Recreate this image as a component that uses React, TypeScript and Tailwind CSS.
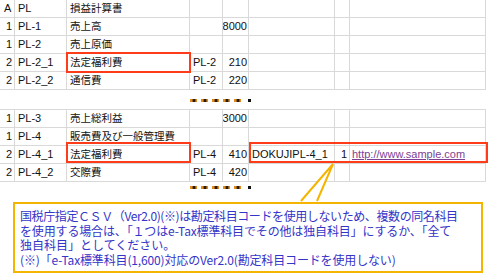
const cols = "grid grid-cols-[15px_52px_123px_33px_26px_86px_15px_136px]";
const cell = "h-[18px] border-r border-b border-[#d9d9d9] flex items-center overflow-hidden whitespace-nowrap";

type Row = { a: string; pl: string; name: string; ref?: string; val?: string };

const top: Row[] = [
  { a: "1", pl: "PL-1", name: "売上高", val: "8000" },
  { a: "1", pl: "PL-2", name: "売上原価" },
  { a: "2", pl: "PL-2_1", name: "法定福利費", ref: "PL-2", val: "210" },
  { a: "2", pl: "PL-2_2", name: "通信費", ref: "PL-2", val: "220" },
];

const bottom: Row[] = [
  { a: "1", pl: "PL-3", name: "売上総利益", val: "3000" },
  { a: "1", pl: "PL-4", name: "販売費及び一般管理費" },
  { a: "2", pl: "PL-4_1", name: "法定福利費", ref: "PL-4", val: "410" },
  { a: "2", pl: "PL-4_2", name: "交際費", ref: "PL-4", val: "420" },
];

function SheetRow({ r, extra }: { r: Row; extra?: boolean }) {
  return (
    <div className={cols}>
      <div className={`${cell} justify-end pr-[2px]`}>{r.a}</div>
      <div className={`${cell} pl-[3px]`}>{r.pl}</div>
      <div className={`${cell} pl-[3px] text-[10.5px]`}>{r.name}</div>
      <div className={`${cell} pl-[3px]`}>{r.ref}</div>
      <div className={`${cell} justify-end pr-[1px]`}>{r.val}</div>
      <div className={`${cell} pl-[3px]`}>{extra ? "DOKUJIPL-4_1" : ""}</div>
      <div className={`${cell} justify-end pr-[2px]`}>{extra ? "1" : ""}</div>
      <div className={`${cell} pl-[2px]`}>
        {extra && <span className="text-[#7d3f93] underline">http://www.sample.com</span>}
      </div>
    </div>
  );
}

function Dashes() {
  return (
    <div className="flex items-center h-[3px] ml-[190px] gap-[4px]">
      {[0, 1, 2, 3, 4].map((i) => (
        <span key={i} className="w-[7px] h-[3px] bg-[linear-gradient(90deg,#e08a1e_0%,#e08a1e_30%,#2a1a08_45%,#2a1a08_70%,#e08a1e_85%)]" />
      ))}
      <span className="w-[3px] h-[3px] bg-[#111] ml-[3px]" />
    </div>
  );
}

export default function App() {
  return (
    <div className="relative w-[492px] h-[275px] bg-white overflow-hidden text-[11px] text-[#111] font-['Liberation_Sans','Noto_Sans_CJK_JP',sans-serif]">
      {/* header */}
      <div className={cols}>
        <div className={`${cell} h-[17px] pl-[4px]`}>A</div>
        <div className={`${cell} h-[17px] pl-[3px]`}>PL</div>
        <div className={`${cell} h-[17px] pl-[3px] text-[10.5px]`}>損益計算書</div>
        <div className={`${cell} h-[17px]`} />
        <div className={`${cell} h-[17px]`} />
        <div className={`${cell} h-[17px]`} />
        <div className={`${cell} h-[17px]`} />
        <div className={`${cell} h-[17px]`} />
      </div>
      {top.map((r) => (
        <SheetRow key={r.pl} r={r} />
      ))}

      <div className="h-[19px] pt-[9px]">
        <Dashes />
      </div>

      <div className="border-t border-[#d9d9d9] w-[486px]">
        {bottom.map((r) => (
          <SheetRow key={r.pl} r={r} extra={r.pl === "PL-4_1"} />
        ))}
      </div>

      <div className="h-[20px] pt-[4px]">
        <Dashes />
      </div>

      {/* callout */}
      <div className="ml-[13px] w-[470px] h-[71px] border-2 border-[#f4b400] pl-[5px] pt-[5px] text-[12px] leading-[14.5px] text-[#3434c8] font-['Noto_Sans_CJK_JP',sans-serif] whitespace-nowrap">
        <span className="tracking-[-0.4px]">国税庁指定ＣＳＶ（Ver2.0)(※)は勘定科目コードを使用しないため、複数の同名科目</span>
        <br />
        <span className="tracking-[-0.15px]">を使用する場合は、「１つはe-Tax標準科目でその他は独自科目」にするか、「全て</span>
        <br />
        独自科目」としてください。
        <br />
        <span className="tracking-[-0.15px]">(※)「e-Tax標準科目(1,600)対応のVer2.0(勘定科目コードを使用しない)</span>
      </div>

      {/* annotations */}
      <div className="absolute left-[66px] top-[52px] w-[125px] h-[21px] border-2 border-[#ff3c1a]" />
      <div className="absolute left-[66px] top-[142px] w-[125px] h-[21px] border-2 border-[#ff3c1a]" />
      <div className="absolute left-[249px] top-[142px] w-[239px] h-[21px] border-2 border-[#ff3c1a]" />
      <svg className="absolute left-0 top-0" width="492" height="275">
        <polygon points="301,202 333,164 317,202" fill="#fff" />
        <polyline points="301,201 333,164 317,201" fill="none" stroke="#f4b400" strokeWidth="2" />
      </svg>
    </div>
  );
}
